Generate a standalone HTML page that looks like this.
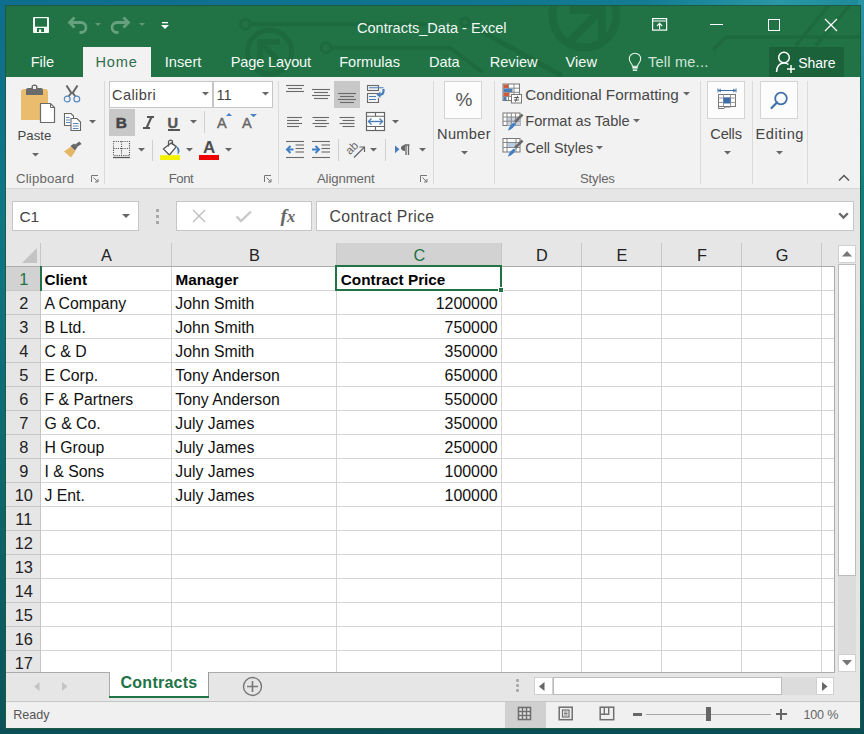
<!DOCTYPE html>
<html><head><meta charset="utf-8">
<style>
*{margin:0;padding:0;box-sizing:border-box}
html,body{width:864px;height:734px;overflow:hidden}
body{position:relative;font-family:"Liberation Sans",sans-serif;background:linear-gradient(180deg,#0e6d8a 0%,#0d6a7e 30%,#0c5a66 70%,#0a4d55 100%)}
.a{position:absolute;display:block}
.t{position:absolute;white-space:nowrap;line-height:1}
</style></head><body>

<div class="a" style="left:0px;top:0px;width:864px;height:6px;background:linear-gradient(90deg,#0e6e8e 0%,#0f7490 50%,#137c93 75%,#2a97a6 90%,#1c8a9a 100%)"></div>
<div class="a" style="left:0px;top:0px;width:6px;height:734px;background:linear-gradient(180deg,#0e6e8e 0%,#0f7686 30%,#0d6a70 60%,#0a5358 100%)"></div>
<div class="a" style="left:858px;top:0px;width:6px;height:734px;background:linear-gradient(180deg,#2a95a5 0%,#14807e 25%,#0e7372 50%,#0b5d60 80%,#0a4f55 100%)"></div>
<div class="a" style="left:0px;top:727px;width:864px;height:7px;background:linear-gradient(90deg,#0a5056,#0a4d55)"></div>
<div class="a" style="left:5px;top:5px;width:856px;height:724px;background:#1d5a40"></div>
<div class="a" style="left:6px;top:6px;width:854px;height:71px;background:#217346"></div>
<svg class="a" style="left:6px;top:6px;" width="854" height="71" viewBox="0 0 854 71">
<g stroke="#1d6a3e" fill="none">
<line x1="239.4" y1="18.2" x2="420" y2="18.2" stroke-width="4"/>
<circle cx="239.4" cy="18.2" r="4.8" stroke-width="3" fill="#217346"/>
<polyline points="320,41.7 444,41.7 476,66" stroke-width="4"/>
<circle cx="320" cy="41.7" r="4.8" stroke-width="3" fill="#217346"/>
<circle cx="263.6" cy="46" r="22" stroke-width="5"/>
<circle cx="578.4" cy="9.5" r="32" stroke-width="8"/>
<line x1="564" y1="35" x2="593" y2="6" stroke-width="8"/>
<polyline points="564,4 596,4 596,34" stroke-width="8"/>
<line x1="459" y1="16" x2="556" y2="70" stroke-width="5"/><circle cx="459" cy="16" r="4" stroke-width="3" fill="#217346"/>
<line x1="707" y1="43.7" x2="719.8" y2="31" stroke-width="3.5"/>
<line x1="719.8" y1="31" x2="854" y2="31" stroke-width="3.5"/>
<line x1="790" y1="39.5" x2="823" y2="-1" stroke-width="3.5"/>
<line x1="810" y1="39.5" x2="844" y2="-1" stroke-width="3.5"/>
<polyline points="254,54 254,36 274,36" stroke-width="5.5"/>
<line x1="256" y1="38" x2="272" y2="54" stroke-width="5.5"/>
</g>
</svg>
<div class="t" style="left:357.00px;top:21px;font-size:14.55px;color:#f0f7f2;">Contracts_Data - Excel</div>
<svg class="a" style="left:33px;top:17px;" width="16" height="16" viewBox="0 0 16 16">
<rect x="0" y="0" width="16" height="16" rx="0.8" fill="#f4fbf6"/>
<rect x="2" y="1.2" width="12" height="8.5" fill="#217346"/>
<rect x="4" y="11" width="7" height="4" fill="#217346"/>
<rect x="6" y="12.4" width="2.2" height="2.6" fill="#f4fbf6"/>
</svg>
<svg class="a" style="left:66px;top:14px;" width="24" height="22" viewBox="0 0 24 22">
<path d="M3.5,8.5 H15 A5,5 0 0 1 15,18.5 H13.5" fill="none" stroke="#67a07f" stroke-width="2.8"/>
<polyline points="8.5,3.5 3.5,8.5 8.5,13.5" fill="none" stroke="#67a07f" stroke-width="2.8"/>
</svg>
<svg class="a" style="left:95px;top:23px;" width="6" height="3" viewBox="0 0 6 3"><polygon points="0,0 6,0 3,3" fill="#5e9a77"/></svg>
<svg class="a" style="left:108px;top:14px;" width="24" height="22" viewBox="0 0 24 22">
<path d="M20.5,8.5 H9 A5,5 0 0 0 9,18.5 H10.5" fill="none" stroke="#67a07f" stroke-width="2.8"/>
<polyline points="15.5,3.5 20.5,8.5 15.5,13.5" fill="none" stroke="#67a07f" stroke-width="2.8"/>
</svg>
<svg class="a" style="left:139px;top:23px;" width="6" height="3" viewBox="0 0 6 3"><polygon points="0,0 6,0 3,3" fill="#5e9a77"/></svg>
<svg class="a" style="left:161px;top:22px;" width="8" height="8" viewBox="0 0 8 8"><rect x="1" y="0" width="6" height="1.3" fill="#fff"/><polygon points="0,3 8,3 4,7" fill="#fff"/></svg>
<svg class="a" style="left:652px;top:18px;" width="16" height="14" viewBox="0 0 16 14">
<rect x="0.6" y="0.6" width="14" height="11.5" fill="none" stroke="#fff" stroke-width="1.2"/>
<line x1="1" y1="3" x2="14.5" y2="3" stroke="#fff" stroke-width="1"/>
<path d="M7.6,11.5 V5.5 M5,8 L7.6,5.4 L10.2,8" fill="none" stroke="#fff" stroke-width="1.1"/>
</svg>
<div class="a" style="left:710px;top:24px;width:13px;height:1.2px;background:#fff"></div>
<div class="a" style="left:768px;top:19px;width:12px;height:12px;border:1.2px solid #fff"></div>
<svg class="a" style="left:824px;top:18px;" width="14" height="14" viewBox="0 0 14 14"><path d="M1,1 L13,13 M13,1 L1,13" stroke="#fff" stroke-width="1.3"/></svg>
<div class="a" style="left:83px;top:47px;width:68px;height:30px;background:#f2f2f2"></div>
<div class="t" style="left:30.70px;top:55px;font-size:14.6px;color:#f3faf5;">File</div>
<div class="t" style="left:95.50px;top:55px;font-size:14.6px;color:#2f6e4c;letter-spacing:0.8px;">Home</div>
<div class="t" style="left:164.80px;top:55px;font-size:14.6px;color:#f3faf5;">Insert</div>
<div class="t" style="left:230.70px;top:55px;font-size:14.6px;color:#f3faf5;letter-spacing:-0.15px;">Page Layout</div>
<div class="t" style="left:339.20px;top:55px;font-size:14.6px;color:#f3faf5;">Formulas</div>
<div class="t" style="left:428.90px;top:55px;font-size:14.6px;color:#f3faf5;">Data</div>
<div class="t" style="left:489.70px;top:55px;font-size:14.6px;color:#f3faf5;">Review</div>
<div class="t" style="left:565.60px;top:55px;font-size:14.6px;color:#f3faf5;">View</div>
<svg class="a" style="left:628px;top:52px;" width="15" height="20" viewBox="0 0 15 20">
<path d="M7,1.2 C3.6,1.2 1.3,3.8 1.3,6.8 C1.3,9.2 2.6,10.6 3.6,12 C4.2,12.9 4.4,13.6 4.4,14.3 H9.6 C9.6,13.6 9.8,12.9 10.4,12 C11.4,10.6 12.7,9.2 12.7,6.8 C12.7,3.8 10.4,1.2 7,1.2 Z" fill="none" stroke="#eaf5ee" stroke-width="1.1"/>
<rect x="4.3" y="14.6" width="5.4" height="2" fill="#eaf5ee"/><rect x="4.8" y="17.4" width="4.4" height="1.5" fill="#eaf5ee"/>
</svg>
<div class="t" style="left:648.00px;top:55px;font-size:14.6px;color:#cfe6d7;letter-spacing:0.2px;">Tell me...</div>
<div class="a" style="left:769px;top:47px;width:75px;height:30px;background:#1b6139"></div>
<svg class="a" style="left:775px;top:50px;" width="22" height="25" viewBox="0 0 22 25">
<circle cx="9" cy="7.5" r="5.3" fill="none" stroke="#fff" stroke-width="1.5"/>
<path d="M1.5,22 C1.5,16 5,13 9,13 C11,13 12.5,13.6 13.5,14.5" fill="none" stroke="#fff" stroke-width="1.5"/>
<path d="M16,15 V23 M12,19 H20" stroke="#fff" stroke-width="1.5"/>
</svg>
<div class="t" style="left:798.20px;top:56px;font-size:14.0px;color:#fff;">Share</div>
<div class="a" style="left:6px;top:77px;width:854px;height:111px;background:#f2f2f2"></div>
<div class="a" style="left:6px;top:188px;width:854px;height:1px;background:#d6d6d6"></div>
<div class="a" style="left:104px;top:81px;width:1px;height:103px;background:#dadada"></div>
<div class="a" style="left:278px;top:81px;width:1px;height:103px;background:#dadada"></div>
<div class="a" style="left:433px;top:81px;width:1px;height:103px;background:#dadada"></div>
<div class="a" style="left:494px;top:81px;width:1px;height:103px;background:#dadada"></div>
<div class="a" style="left:700px;top:81px;width:1px;height:103px;background:#dadada"></div>
<div class="a" style="left:752px;top:81px;width:1px;height:103px;background:#dadada"></div>
<div class="a" style="left:807px;top:81px;width:1px;height:103px;background:#dadada"></div>
<div class="t" style="left:16.00px;top:172px;font-size:13.2px;color:#666;letter-spacing:0.2px;">Clipboard</div>
<div class="t" style="left:168.80px;top:172px;font-size:13.2px;color:#666;letter-spacing:-0.5px;">Font</div>
<div class="t" style="left:316.90px;top:172px;font-size:13.2px;color:#666;letter-spacing:-0.1px;">Alignment</div>
<div class="t" style="left:580.00px;top:172px;font-size:13.2px;color:#666;letter-spacing:-0.2px;">Styles</div>
<svg class="a" style="left:91px;top:175px;" width="8" height="8" viewBox="0 0 8 8"><path d="M0.5,7 V0.5 H7" fill="none" stroke="#777" stroke-width="1"/><path d="M2.5,2.5 L7,7 M4,7 H7 V4" fill="none" stroke="#777" stroke-width="1"/></svg>
<svg class="a" style="left:264px;top:175px;" width="8" height="8" viewBox="0 0 8 8"><path d="M0.5,7 V0.5 H7" fill="none" stroke="#777" stroke-width="1"/><path d="M2.5,2.5 L7,7 M4,7 H7 V4" fill="none" stroke="#777" stroke-width="1"/></svg>
<svg class="a" style="left:420px;top:175px;" width="8" height="8" viewBox="0 0 8 8"><path d="M0.5,7 V0.5 H7" fill="none" stroke="#777" stroke-width="1"/><path d="M2.5,2.5 L7,7 M4,7 H7 V4" fill="none" stroke="#777" stroke-width="1"/></svg>
<svg class="a" style="left:20px;top:84px;" width="37" height="40" viewBox="0 0 37 40">
<path d="M1,8 Q1,5 4,5 H25 Q28,5 28,8 V36 H1 Z" fill="#e9bd6d"/>
<path d="M6,11 V6 Q6,4 8,4 H11.5 V3 Q11.5,0.5 14.5,0.5 Q17.5,0.5 17.5,3 V4 H21 Q23,4 23,6 V11 Z" fill="#6b6b6b"/>
<rect x="13" y="2" width="3" height="3" fill="#f2f2f2"/>
<path d="M20.5,19.5 H30.5 L34.5,23.5 V38.5 H20.5 Z" fill="#fff" stroke="#6b6b6b" stroke-width="1.2"/>
<path d="M30.5,19.5 V23.5 H34.5" fill="none" stroke="#6b6b6b" stroke-width="1"/>
</svg>
<div class="t" style="left:17.50px;top:129px;font-size:13.2px;color:#444;">Paste</div>
<svg class="a" style="left:32px;top:152.5px;" width="7" height="4" viewBox="0 0 7 4"><polygon points="0,0 7,0 3.5,3.5" fill="#666"/></svg>
<svg class="a" style="left:63px;top:85px;" width="18" height="18" viewBox="0 0 18 18">
<path d="M3.5,0.5 L8.3,8 L5.5,11.5 M14.5,0.5 L9.7,8 L12.5,11.5" fill="none" stroke="#666" stroke-width="2"/>
<circle cx="4.2" cy="14" r="2.9" fill="none" stroke="#5a8ac4" stroke-width="1.2"/>
<circle cx="13.8" cy="14" r="2.9" fill="none" stroke="#5a8ac4" stroke-width="1.2"/>
</svg>
<svg class="a" style="left:63px;top:112px;" width="19" height="20" viewBox="0 0 19 20">
<path d="M1.5,1.5 H8 L10.5,4 V13.5 H1.5 Z" fill="#fff" stroke="#666" stroke-width="1.1"/>
<path d="M8,6.5 H14 L17.5,10 V18.5 H8 Z" fill="#fff" stroke="#666" stroke-width="1.1"/>
<path d="M3,5.5 H6.5 M3,8 H7 M3,10.5 H7" stroke="#4a7ab0" stroke-width="0.9"/>
<path d="M9.8,11.5 H15.5 M9.8,14 H15.5 M9.8,16.5 H15.5" stroke="#4a7ab0" stroke-width="0.9"/>
</svg>
<svg class="a" style="left:88.5px;top:120px;" width="7" height="4" viewBox="0 0 7 4"><polygon points="0,0 7,0 3.5,3.5" fill="#666"/></svg>
<svg class="a" style="left:63px;top:141px;" width="20" height="18" viewBox="0 0 20 18">
<polygon points="1,10.5 8,5.5 12.5,10 8,16.5" fill="#e6b667"/>
<polygon points="7.5,5 11,2.5 14.5,6 12,9.5" fill="#666"/>
<polygon points="12,3.5 16.5,0.5 18.5,3 14,6" fill="#666"/>
</svg>
<div class="a" style="left:109px;top:81px;width:104px;height:27px;background:#fff;border:1px solid #c6c6c6"></div>
<div class="a" style="left:213px;top:81px;width:60px;height:27px;background:#fff;border:1px solid #c6c6c6"></div>
<div class="t" style="left:112.00px;top:88px;font-size:14.6px;color:#444;letter-spacing:0.4px;">Calibri</div>
<div class="t" style="left:216.50px;top:88px;font-size:14.6px;color:#444;">11</div>
<svg class="a" style="left:202px;top:92px;" width="7" height="4" viewBox="0 0 7 4"><polygon points="0,0 7,0 3.5,3.5" fill="#666"/></svg>
<svg class="a" style="left:262px;top:92px;" width="7" height="4" viewBox="0 0 7 4"><polygon points="0,0 7,0 3.5,3.5" fill="#666"/></svg>
<div class="a" style="left:109px;top:109px;width:26px;height:27px;background:#c8c8c8"></div>
<div class="t" style="left:115.80px;top:115px;font-size:15.5px;color:#444;font-weight:bold;-webkit-text-stroke:0.5px #444;">B</div>
<svg class="a" style="left:142px;top:116px;" width="13" height="13" viewBox="0 0 13 13"><path d="M5,1 H12 M1,12 H8 M9.5,1 L4.5,12" stroke="#555" stroke-width="2.1"/></svg>
<div class="t" style="left:167.60px;top:116px;font-size:14.6px;color:#555;font-weight:bold;-webkit-text-stroke:0.4px #555;">U</div>
<div class="a" style="left:168px;top:129.3px;width:11.5px;height:1.8px;background:#555"></div>
<svg class="a" style="left:189.5px;top:120px;" width="7" height="4" viewBox="0 0 7 4"><polygon points="0,0 7,0 3.5,3.5" fill="#666"/></svg>
<div class="a" style="left:204px;top:111px;width:1px;height:22px;background:#d0d0d0"></div>
<div class="t" style="left:217.00px;top:116px;font-size:14.5px;color:#666;-webkit-text-stroke:0.4px #666;">A</div>
<svg class="a" style="left:225.5px;top:112.5px;" width="6" height="3.5" viewBox="0 0 6 3.5"><polygon points="0,3 6,3 3,0" fill="#4a82c3"/></svg>
<div class="t" style="left:242.00px;top:116px;font-size:14.5px;color:#666;-webkit-text-stroke:0.4px #666;">A</div>
<svg class="a" style="left:249.7px;top:113.5px;" width="7" height="3.5" viewBox="0 0 7 3.5"><polygon points="0,0 7,0 3.5,3.2" fill="#4a82c3"/></svg>
<svg class="a" style="left:112px;top:140px;" width="19" height="19" viewBox="0 0 19 19">
<g stroke="#555" stroke-width="1.1" stroke-dasharray="1.1,1.1" fill="none">
<rect x="1.5" y="1.5" width="16" height="14"/>
<line x1="9.5" y1="1.5" x2="9.5" y2="15.5"/><line x1="1.5" y1="8.5" x2="17.5" y2="8.5"/>
</g><line x1="1" y1="17.5" x2="18" y2="17.5" stroke="#555" stroke-width="1.3"/>
</svg>
<svg class="a" style="left:137.5px;top:148px;" width="7" height="4" viewBox="0 0 7 4"><polygon points="0,0 7,0 3.5,3.5" fill="#666"/></svg>
<div class="a" style="left:152px;top:140px;width:1px;height:21px;background:#d0d0d0"></div>
<svg class="a" style="left:159px;top:138px;" width="22" height="23" viewBox="0 0 22 23">
<polygon points="4.3,10.9 12.2,4.9 17.3,8.6 10.4,17" fill="#fff" stroke="#555" stroke-width="1.3" stroke-linejoin="round"/>
<path d="M9.5,8.5 V4 C9.5,1.5 13.5,1.5 13.5,4 V7" fill="none" stroke="#555" stroke-width="1.2"/>
<path d="M17.3,8.6 C19.5,9 20.8,11 20.5,13.5 C20.2,15 19.5,16 18.5,16.5 C19,14 18.5,11 17.3,8.6 Z" fill="#4a7ebb"/>
<rect x="1" y="17.2" width="20" height="4.8" fill="#f2f200"/>
</svg>
<svg class="a" style="left:185.5px;top:148px;" width="7" height="4" viewBox="0 0 7 4"><polygon points="0,0 7,0 3.5,3.5" fill="#666"/></svg>
<div class="t" style="left:203.00px;top:139px;font-size:17px;color:#4f4f4f;font-weight:bold;">A</div>
<div class="a" style="left:199px;top:155px;width:20px;height:5px;background:#ee0000"></div>
<svg class="a" style="left:224.5px;top:148px;" width="7" height="4" viewBox="0 0 7 4"><polygon points="0,0 7,0 3.5,3.5" fill="#666"/></svg>
<div class="a" style="left:334px;top:81px;width:26px;height:27px;background:#c8c8c8"></div>
<svg class="a" style="left:0;top:0" width="864" height="200" viewBox="0 0 864 200"><line x1="286" y1="85.5" x2="304" y2="85.5" stroke="#6a6a6a" stroke-width="1.1"/><line x1="288" y1="88.5" x2="302" y2="88.5" stroke="#6a6a6a" stroke-width="1.1"/><line x1="286" y1="91.5" x2="304" y2="91.5" stroke="#6a6a6a" stroke-width="1.1"/><line x1="312" y1="89.5" x2="330" y2="89.5" stroke="#6a6a6a" stroke-width="1.1"/><line x1="314" y1="92.5" x2="328" y2="92.5" stroke="#6a6a6a" stroke-width="1.1"/><line x1="312" y1="95.5" x2="330" y2="95.5" stroke="#6a6a6a" stroke-width="1.1"/><line x1="314" y1="98.5" x2="328" y2="98.5" stroke="#6a6a6a" stroke-width="1.1"/><line x1="338" y1="93.5" x2="356" y2="93.5" stroke="#6a6a6a" stroke-width="1.1"/><line x1="340" y1="96.5" x2="354" y2="96.5" stroke="#6a6a6a" stroke-width="1.1"/><line x1="338" y1="99.5" x2="356" y2="99.5" stroke="#6a6a6a" stroke-width="1.1"/><line x1="340" y1="102.5" x2="354" y2="102.5" stroke="#6a6a6a" stroke-width="1.1"/><line x1="287" y1="117.5" x2="302" y2="117.5" stroke="#6a6a6a" stroke-width="1.1"/><line x1="312.5" y1="117.5" x2="329" y2="117.5" stroke="#6a6a6a" stroke-width="1.1"/><line x1="339.5" y1="117.5" x2="354.5" y2="117.5" stroke="#6a6a6a" stroke-width="1.1"/><line x1="287" y1="120.5" x2="299" y2="120.5" stroke="#6a6a6a" stroke-width="1.1"/><line x1="315" y1="120.5" x2="326.5" y2="120.5" stroke="#6a6a6a" stroke-width="1.1"/><line x1="342.5" y1="120.5" x2="354.5" y2="120.5" stroke="#6a6a6a" stroke-width="1.1"/><line x1="287" y1="123.5" x2="302" y2="123.5" stroke="#6a6a6a" stroke-width="1.1"/><line x1="312.5" y1="123.5" x2="329" y2="123.5" stroke="#6a6a6a" stroke-width="1.1"/><line x1="339.5" y1="123.5" x2="354.5" y2="123.5" stroke="#6a6a6a" stroke-width="1.1"/><line x1="287" y1="126.5" x2="299" y2="126.5" stroke="#6a6a6a" stroke-width="1.1"/><line x1="315" y1="126.5" x2="326.5" y2="126.5" stroke="#6a6a6a" stroke-width="1.1"/><line x1="342.5" y1="126.5" x2="354.5" y2="126.5" stroke="#6a6a6a" stroke-width="1.1"/><line x1="286" y1="141.5" x2="304" y2="141.5" stroke="#6a6a6a" stroke-width="1.1"/><line x1="295.5" y1="145" x2="304" y2="145" stroke="#6a6a6a" stroke-width="1.1"/><line x1="295.5" y1="148.5" x2="304" y2="148.5" stroke="#6a6a6a" stroke-width="1.1"/><line x1="295.5" y1="152" x2="304" y2="152" stroke="#6a6a6a" stroke-width="1.1"/><line x1="286" y1="157.5" x2="304" y2="157.5" stroke="#6a6a6a" stroke-width="1.1"/><path d="M287.5,149.5 H293.5" stroke="#3f7fc4" stroke-width="2"/><polyline points="290.5,146 287,149.5 290.5,153" fill="none" stroke="#3f7fc4" stroke-width="2"/><line x1="312" y1="141.5" x2="330" y2="141.5" stroke="#6a6a6a" stroke-width="1.1"/><line x1="321.5" y1="145" x2="330" y2="145" stroke="#6a6a6a" stroke-width="1.1"/><line x1="321.5" y1="148.5" x2="330" y2="148.5" stroke="#6a6a6a" stroke-width="1.1"/><line x1="321.5" y1="152" x2="330" y2="152" stroke="#6a6a6a" stroke-width="1.1"/><line x1="312" y1="157.5" x2="330" y2="157.5" stroke="#6a6a6a" stroke-width="1.1"/><path d="M312,149.5 H318.5" stroke="#3f7fc4" stroke-width="2"/><polyline points="315.5,146 319,149.5 315.5,153" fill="none" stroke="#3f7fc4" stroke-width="2"/><rect x="367.5" y="85.5" width="11" height="5" fill="none" stroke="#6a6a6a" stroke-width="1.1"/><path d="M378.5,93.5 H367.5 V102.5 H378.5 V98" fill="none" stroke="#6a6a6a" stroke-width="1.1"/><path d="M369,87.8 H383.5 M369,96.5 H376 M369,99.5 H376" stroke="#4a7ebb" stroke-width="1.1"/><path d="M383.5,89 V91 C383.5,93.5 382,94.8 379.5,94.8" fill="none" stroke="#4a7ebb" stroke-width="2.2"/><polygon points="376.5,94.8 380.5,91.5 380.5,98" fill="#4a7ebb"/></svg>
<svg class="a" style="left:365px;top:111px;" width="21" height="21" viewBox="0 0 21 21">
<rect x="1.5" y="1.5" width="18" height="18" fill="#fff" stroke="#666" stroke-width="1.2"/>
<path d="M1.5,5.3 H19.5 M1.5,15.5 H19.5 M10.5,1.5 V5.3 M10.5,15.5 V19.5" stroke="#666" stroke-width="1.1"/>
<path d="M3.5,10.5 H17.5" stroke="#4a7ebb" stroke-width="1.4"/>
<polyline points="6.5,7.5 3.5,10.5 6.5,13.5" fill="none" stroke="#4a7ebb" stroke-width="1.4"/>
<polyline points="14.5,7.5 17.5,10.5 14.5,13.5" fill="none" stroke="#4a7ebb" stroke-width="1.4"/>
</svg>
<svg class="a" style="left:392px;top:120px;" width="7" height="4" viewBox="0 0 7 4"><polygon points="0,0 7,0 3.5,3.5" fill="#666"/></svg>
<div class="a" style="left:338px;top:139px;width:1px;height:22px;background:#d0d0d0"></div>
<svg class="a" style="left:344px;top:139px;" width="24" height="21" viewBox="0 0 24 21">
<text x="2" y="13" font-family="Liberation Sans" font-size="11.5" fill="#666" transform="rotate(-45 8 10)">ab</text>
<path d="M10,18.5 L20.5,8" stroke="#666" stroke-width="1.2"/><polyline points="15.5,8 20.5,8 20.5,13" fill="none" stroke="#666" stroke-width="1.2"/>
</svg>
<svg class="a" style="left:370px;top:148px;" width="7" height="4" viewBox="0 0 7 4"><polygon points="0,0 7,0 3.5,3.5" fill="#666"/></svg>
<div class="a" style="left:385px;top:139px;width:1px;height:22px;background:#d0d0d0"></div>
<svg class="a" style="left:394px;top:144px;" width="18" height="12" viewBox="0 0 18 12">
<polygon points="1,1.5 5.5,5.3 1,9.3" fill="#4a7ebb"/>
<path d="M10.5,1 H15.5 M12,1 V11 M14.5,1 V11" stroke="#666" stroke-width="1.3"/>
<path d="M11,1 C8,1 7,2.5 7,4 C7,5.5 8,7 11,7 Z" fill="#666"/>
</svg>
<svg class="a" style="left:419px;top:148px;" width="7" height="4" viewBox="0 0 7 4"><polygon points="0,0 7,0 3.5,3.5" fill="#666"/></svg>
<div class="a" style="left:444px;top:81px;width:38px;height:38px;background:#fcfcfc;border:1px solid #d4d4d4"></div>
<div class="t" style="left:455.50px;top:90px;font-size:19px;color:#555;">%</div>
<div class="t" style="left:437.00px;top:127px;font-size:14.6px;color:#444;letter-spacing:0.35px;">Number</div>
<svg class="a" style="left:461px;top:151px;" width="7" height="4" viewBox="0 0 7 4"><polygon points="0,0 7,0 3.5,3.5" fill="#666"/></svg>
<svg class="a" style="left:502px;top:83px;" width="21" height="21" viewBox="0 0 21 21">
<rect x="1" y="1" width="16.5" height="16.5" fill="#fff" stroke="#777" stroke-width="1"/>
<path d="M1,5.2 H17.5 M1,9.3 H17.5 M1,13.4 H17.5 M6.5,1 V17.5 M12,1 V17.5" stroke="#888" stroke-width="1"/>
<rect x="1.5" y="1.5" width="4.5" height="3.5" fill="#d05a3a"/><rect x="1.5" y="5.7" width="9" height="3.3" fill="#4a7ebb"/>
<rect x="1.5" y="9.8" width="6" height="3.3" fill="#d05a3a"/><rect x="1.5" y="13.9" width="3" height="3.3" fill="#4a7ebb"/>
<rect x="9.5" y="11.5" width="10" height="8.5" fill="#fff" stroke="#777" stroke-width="1"/>
<path d="M11.8,14.6 H17.2 M11.8,17 H17.2 M15.6,12.8 L13.4,18.8" stroke="#444" stroke-width="0.9"/>
</svg>
<div class="t" style="left:525.30px;top:87px;font-size:15.25px;color:#484848;">Conditional Formatting</div>
<svg class="a" style="left:682.5px;top:92px;" width="7" height="4" viewBox="0 0 7 4"><polygon points="0,0 7,0 3.5,3.5" fill="#666"/></svg>
<svg class="a" style="left:502px;top:112px;" width="22" height="19" viewBox="0 0 22 19">
<rect x="1" y="1" width="17" height="12.5" fill="#fff" stroke="#777" stroke-width="1"/>
<rect x="5" y="5" width="13" height="8.5" fill="#c9d3df"/>
<path d="M1,5 H18 M1,9.2 H18 M5,1 V13.5 M9.3,1 V13.5 M13.6,1 V13.5" stroke="#888" stroke-width="1"/>
<path d="M13,10 L20.5,2.5" stroke="#6a6a6a" stroke-width="2.6"/>
<path d="M6,18.5 C7,15 9,12 12,10.5 L13.5,12 C12,15 10,17.5 6,18.5 Z" fill="#3f7fc4"/>
</svg>
<div class="t" style="left:525.30px;top:114px;font-size:14.6px;color:#484848;">Format as Table</div>
<svg class="a" style="left:633px;top:119px;" width="7" height="4" viewBox="0 0 7 4"><polygon points="0,0 7,0 3.5,3.5" fill="#666"/></svg>
<svg class="a" style="left:502px;top:137px;" width="22" height="20" viewBox="0 0 22 20">
<rect x="1" y="1.5" width="17" height="13.5" fill="#fff" stroke="#777" stroke-width="1"/>
<rect x="5" y="5.5" width="9" height="5" fill="#b9cde5"/>
<path d="M1,5.5 H18 M1,10.5 H18 M5,1.5 V15 M14,1.5 V15" stroke="#888" stroke-width="1"/>
<path d="M13,11 L20.5,3.5" stroke="#6a6a6a" stroke-width="2.6"/>
<path d="M6,19.5 C7,16 9,13 12,11.5 L13.5,13 C12,16 10,18.5 6,19.5 Z" fill="#3f7fc4"/>
</svg>
<div class="t" style="left:525.30px;top:141px;font-size:14.35px;color:#484848;">Cell Styles</div>
<svg class="a" style="left:596px;top:146px;" width="7" height="4" viewBox="0 0 7 4"><polygon points="0,0 7,0 3.5,3.5" fill="#666"/></svg>
<div class="a" style="left:707px;top:81px;width:38px;height:38px;background:#fcfcfc;border:1px solid #d4d4d4"></div>
<svg class="a" style="left:716px;top:88px;" width="22" height="23" viewBox="0 0 22 23">
<path d="M2.5,2.5 H19.5" stroke="#3d6fa8" stroke-width="1"/><path d="M2,0.5 V4.5 M20,0.5 V4.5" stroke="#3d6fa8" stroke-width="1"/>
<polyline points="5,1 2.5,2.5 5,4" fill="none" stroke="#3d6fa8" stroke-width="0.9"/><polyline points="17,1 19.5,2.5 17,4" fill="none" stroke="#3d6fa8" stroke-width="0.9"/>
<rect x="2.5" y="6.5" width="17" height="12" fill="#fff" stroke="#777" stroke-width="1"/>
<path d="M2.5,10 H19.5 M2.5,14.5 H19.5 M7.5,6.5 V18.5 M14.5,6.5 V18.5" stroke="#999" stroke-width="1"/>
<rect x="7.5" y="9.5" width="7" height="6" fill="#3d6fa8"/>
<path d="M2.5,18.5 V20.5 H8 L9,19 H14.5 V18.5" fill="none" stroke="#777" stroke-width="1"/>
</svg>
<div class="t" style="left:710.30px;top:127px;font-size:14.6px;color:#444;letter-spacing:-0.2px;">Cells</div>
<svg class="a" style="left:724px;top:151px;" width="7" height="4" viewBox="0 0 7 4"><polygon points="0,0 7,0 3.5,3.5" fill="#666"/></svg>
<div class="a" style="left:760px;top:81px;width:38px;height:38px;background:#fcfcfc;border:1px solid #d4d4d4"></div>
<svg class="a" style="left:769px;top:90px;" width="20" height="20" viewBox="0 0 20 20">
<circle cx="12" cy="8.5" r="5.8" fill="none" stroke="#3d6fa8" stroke-width="1.8"/>
<path d="M8,12.5 L2.5,18" stroke="#3d6fa8" stroke-width="2.2" stroke-linecap="round"/>
</svg>
<div class="t" style="left:755.50px;top:127px;font-size:14.6px;color:#444;letter-spacing:0.55px;">Editing</div>
<svg class="a" style="left:776px;top:151px;" width="7" height="4" viewBox="0 0 7 4"><polygon points="0,0 7,0 3.5,3.5" fill="#666"/></svg>
<svg class="a" style="left:838px;top:174px;" width="12" height="8" viewBox="0 0 12 8"><polyline points="1,6.5 6,1.5 11,6.5" fill="none" stroke="#555" stroke-width="1.5"/></svg>
<div class="a" style="left:6px;top:189px;width:854px;height:54px;background:#e6e6e6"></div>
<div class="a" style="left:12px;top:201px;width:127px;height:30px;background:#fff;border:1px solid #c6c6c6"></div>
<div class="t" style="left:19.50px;top:209px;font-size:15.4px;color:#444;">C1</div>
<svg class="a" style="left:122px;top:214px;" width="8" height="4" viewBox="0 0 8 4"><polygon points="0,0 8,0 4,4" fill="#666"/></svg>
<div class="a" style="left:156px;top:209px;width:3px;height:3px;background:#a8a8a8"></div>
<div class="a" style="left:156px;top:215px;width:3px;height:3px;background:#a8a8a8"></div>
<div class="a" style="left:156px;top:221px;width:3px;height:3px;background:#a8a8a8"></div>
<div class="a" style="left:176px;top:201px;width:136px;height:30px;background:#fff;border:1px solid #c6c6c6"></div>
<svg class="a" style="left:191px;top:208px;" width="16" height="16" viewBox="0 0 16 16"><path d="M2,2 L14,14 M14,2 L2,14" stroke="#bdbdbd" stroke-width="1.4"/></svg>
<svg class="a" style="left:234px;top:208px;" width="20" height="16" viewBox="0 0 20 16"><polyline points="2.5,8.5 7,13 17,3.5" fill="none" stroke="#c8c8c8" stroke-width="2.4"/></svg>
<div class="t" style="left:280.50px;top:206px;font-size:19.5px;color:#666;font-weight:bold;font-family:'Liberation Serif',serif;"><i>f</i><span style="font-size:16.5px"><i>x</i></span></div>
<div class="a" style="left:316px;top:201px;width:538px;height:30px;background:#fff;border:1px solid #c6c6c6"></div>
<div class="t" style="left:329.50px;top:209px;font-size:15.8px;color:#444;letter-spacing:0.35px;">Contract Price</div>
<svg class="a" style="left:838px;top:212px;" width="11" height="8" viewBox="0 0 11 8"><polyline points="1.2,1.2 5.5,5.5 9.8,1.2" fill="none" stroke="#686868" stroke-width="2.3"/></svg>
<div class="a" style="left:6px;top:243px;width:854px;height:430px;background:#fff"></div>
<div class="a" style="left:6px;top:243px;width:830px;height:23px;background:#e6e6e6"></div>
<div class="a" style="left:6px;top:266px;width:34px;height:406px;background:#e6e6e6"></div>
<div class="a" style="left:835px;top:243px;width:25px;height:430px;background:#e6e6e6"></div>
<div class="a" style="left:336px;top:243px;width:165px;height:23px;background:#d2d2d2"></div>
<div class="a" style="left:6px;top:266px;width:34px;height:24px;background:#d2d2d2"></div>
<svg class="a" style="left:21px;top:248px;" width="16" height="15" viewBox="0 0 16 15"><polygon points="16,0 16,15 1,15" fill="#c4c4c4"/></svg>
<div class="a" style="left:40px;top:243px;width:1px;height:23px;background:#c6c6c6"></div>
<div class="a" style="left:171px;top:243px;width:1px;height:23px;background:#c6c6c6"></div>
<div class="a" style="left:336px;top:243px;width:1px;height:23px;background:#c6c6c6"></div>
<div class="a" style="left:501px;top:243px;width:1px;height:23px;background:#c6c6c6"></div>
<div class="a" style="left:581px;top:243px;width:1px;height:23px;background:#c6c6c6"></div>
<div class="a" style="left:661px;top:243px;width:1px;height:23px;background:#c6c6c6"></div>
<div class="a" style="left:741px;top:243px;width:1px;height:23px;background:#c6c6c6"></div>
<div class="a" style="left:821px;top:243px;width:1px;height:23px;background:#c6c6c6"></div>
<div class="a" style="left:40px;top:243px;width:1px;height:430px;background:#c6c6c6"></div>
<div class="a" style="left:6px;top:266px;width:829px;height:1px;background:#ababab"></div>
<div class="a" style="left:6px;top:290px;width:34px;height:1px;background:#c6c6c6"></div>
<div class="a" style="left:41px;top:290px;width:794px;height:1px;background:#d4d4d4"></div>
<div class="a" style="left:6px;top:314px;width:34px;height:1px;background:#c6c6c6"></div>
<div class="a" style="left:41px;top:314px;width:794px;height:1px;background:#d4d4d4"></div>
<div class="a" style="left:6px;top:338px;width:34px;height:1px;background:#c6c6c6"></div>
<div class="a" style="left:41px;top:338px;width:794px;height:1px;background:#d4d4d4"></div>
<div class="a" style="left:6px;top:362px;width:34px;height:1px;background:#c6c6c6"></div>
<div class="a" style="left:41px;top:362px;width:794px;height:1px;background:#d4d4d4"></div>
<div class="a" style="left:6px;top:386px;width:34px;height:1px;background:#c6c6c6"></div>
<div class="a" style="left:41px;top:386px;width:794px;height:1px;background:#d4d4d4"></div>
<div class="a" style="left:6px;top:410px;width:34px;height:1px;background:#c6c6c6"></div>
<div class="a" style="left:41px;top:410px;width:794px;height:1px;background:#d4d4d4"></div>
<div class="a" style="left:6px;top:434px;width:34px;height:1px;background:#c6c6c6"></div>
<div class="a" style="left:41px;top:434px;width:794px;height:1px;background:#d4d4d4"></div>
<div class="a" style="left:6px;top:458px;width:34px;height:1px;background:#c6c6c6"></div>
<div class="a" style="left:41px;top:458px;width:794px;height:1px;background:#d4d4d4"></div>
<div class="a" style="left:6px;top:482px;width:34px;height:1px;background:#c6c6c6"></div>
<div class="a" style="left:41px;top:482px;width:794px;height:1px;background:#d4d4d4"></div>
<div class="a" style="left:6px;top:506px;width:34px;height:1px;background:#c6c6c6"></div>
<div class="a" style="left:41px;top:506px;width:794px;height:1px;background:#d4d4d4"></div>
<div class="a" style="left:6px;top:530px;width:34px;height:1px;background:#c6c6c6"></div>
<div class="a" style="left:41px;top:530px;width:794px;height:1px;background:#d4d4d4"></div>
<div class="a" style="left:6px;top:554px;width:34px;height:1px;background:#c6c6c6"></div>
<div class="a" style="left:41px;top:554px;width:794px;height:1px;background:#d4d4d4"></div>
<div class="a" style="left:6px;top:578px;width:34px;height:1px;background:#c6c6c6"></div>
<div class="a" style="left:41px;top:578px;width:794px;height:1px;background:#d4d4d4"></div>
<div class="a" style="left:6px;top:602px;width:34px;height:1px;background:#c6c6c6"></div>
<div class="a" style="left:41px;top:602px;width:794px;height:1px;background:#d4d4d4"></div>
<div class="a" style="left:6px;top:626px;width:34px;height:1px;background:#c6c6c6"></div>
<div class="a" style="left:41px;top:626px;width:794px;height:1px;background:#d4d4d4"></div>
<div class="a" style="left:6px;top:650px;width:34px;height:1px;background:#c6c6c6"></div>
<div class="a" style="left:41px;top:650px;width:794px;height:1px;background:#d4d4d4"></div>
<div class="a" style="left:6px;top:674px;width:34px;height:1px;background:#c6c6c6"></div>
<div class="a" style="left:41px;top:674px;width:794px;height:1px;background:#d4d4d4"></div>
<div class="a" style="left:171px;top:267px;width:1px;height:405px;background:#d4d4d4"></div>
<div class="a" style="left:336px;top:267px;width:1px;height:405px;background:#d4d4d4"></div>
<div class="a" style="left:501px;top:267px;width:1px;height:405px;background:#d4d4d4"></div>
<div class="a" style="left:581px;top:267px;width:1px;height:405px;background:#d4d4d4"></div>
<div class="a" style="left:661px;top:267px;width:1px;height:405px;background:#d4d4d4"></div>
<div class="a" style="left:741px;top:267px;width:1px;height:405px;background:#d4d4d4"></div>
<div class="a" style="left:821px;top:267px;width:1px;height:405px;background:#d4d4d4"></div>
<div class="a" style="left:834px;top:266px;width:1px;height:407px;background:#ababab"></div>
<div class="a" style="left:6px;top:672px;width:829px;height:1px;background:#ababab"></div>
<div class="t" style="left:-43.50px;width:300px;text-align:center;top:247px;font-size:16.3px;color:#222;">A</div>
<div class="t" style="left:104.50px;width:300px;text-align:center;top:247px;font-size:16.3px;color:#222;">B</div>
<div class="t" style="left:269.50px;width:300px;text-align:center;top:247px;font-size:16.3px;color:#217346;">C</div>
<div class="t" style="left:392.00px;width:300px;text-align:center;top:247px;font-size:16.3px;color:#222;">D</div>
<div class="t" style="left:472.00px;width:300px;text-align:center;top:247px;font-size:16.3px;color:#222;">E</div>
<div class="t" style="left:552.00px;width:300px;text-align:center;top:247px;font-size:16.3px;color:#222;">F</div>
<div class="t" style="left:632.00px;width:300px;text-align:center;top:247px;font-size:16.3px;color:#222;">G</div>
<div class="t" style="left:-126.20px;width:300px;text-align:center;top:271px;font-size:16.4px;color:#217346;">1</div>
<div class="t" style="left:-126.20px;width:300px;text-align:center;top:295px;font-size:16.4px;color:#222;">2</div>
<div class="t" style="left:-126.20px;width:300px;text-align:center;top:319px;font-size:16.4px;color:#222;">3</div>
<div class="t" style="left:-126.20px;width:300px;text-align:center;top:343px;font-size:16.4px;color:#222;">4</div>
<div class="t" style="left:-126.20px;width:300px;text-align:center;top:367px;font-size:16.4px;color:#222;">5</div>
<div class="t" style="left:-126.20px;width:300px;text-align:center;top:391px;font-size:16.4px;color:#222;">6</div>
<div class="t" style="left:-126.20px;width:300px;text-align:center;top:415px;font-size:16.4px;color:#222;">7</div>
<div class="t" style="left:-126.20px;width:300px;text-align:center;top:439px;font-size:16.4px;color:#222;">8</div>
<div class="t" style="left:-126.20px;width:300px;text-align:center;top:463px;font-size:16.4px;color:#222;">9</div>
<div class="t" style="left:-126.20px;width:300px;text-align:center;top:487px;font-size:16.4px;color:#222;">10</div>
<div class="t" style="left:-126.20px;width:300px;text-align:center;top:511px;font-size:16.4px;color:#222;">11</div>
<div class="t" style="left:-126.20px;width:300px;text-align:center;top:535px;font-size:16.4px;color:#222;">12</div>
<div class="t" style="left:-126.20px;width:300px;text-align:center;top:559px;font-size:16.4px;color:#222;">13</div>
<div class="t" style="left:-126.20px;width:300px;text-align:center;top:583px;font-size:16.4px;color:#222;">14</div>
<div class="t" style="left:-126.20px;width:300px;text-align:center;top:607px;font-size:16.4px;color:#222;">15</div>
<div class="t" style="left:-126.20px;width:300px;text-align:center;top:631px;font-size:16.4px;color:#222;">16</div>
<div class="t" style="left:-126.20px;width:300px;text-align:center;top:655px;font-size:16.4px;color:#222;">17</div>
<div class="t" style="left:44.50px;top:272px;font-size:15.3px;color:#000;font-weight:bold;">Client</div>
<div class="t" style="left:175.50px;top:272px;font-size:15.3px;color:#000;font-weight:bold;">Manager</div>
<div class="t" style="left:340.80px;top:272px;font-size:15.3px;color:#000;font-weight:bold;">Contract Price</div>
<div class="t" style="left:44.50px;top:296px;font-size:15.8px;color:#111;">A Company</div>
<div class="t" style="left:175.30px;top:296px;font-size:15.8px;color:#111;">John Smith</div>
<div class="t" style="left:197.60px;width:300px;text-align:right;top:296px;font-size:15.9px;color:#111;">1200000</div>
<div class="t" style="left:44.50px;top:320px;font-size:15.8px;color:#111;">B Ltd.</div>
<div class="t" style="left:175.30px;top:320px;font-size:15.8px;color:#111;">John Smith</div>
<div class="t" style="left:197.60px;width:300px;text-align:right;top:320px;font-size:15.9px;color:#111;">750000</div>
<div class="t" style="left:44.50px;top:344px;font-size:15.8px;color:#111;">C &amp; D</div>
<div class="t" style="left:175.30px;top:344px;font-size:15.8px;color:#111;">John Smith</div>
<div class="t" style="left:197.60px;width:300px;text-align:right;top:344px;font-size:15.9px;color:#111;">350000</div>
<div class="t" style="left:44.50px;top:368px;font-size:15.8px;color:#111;">E Corp.</div>
<div class="t" style="left:175.30px;top:368px;font-size:15.8px;color:#111;">Tony Anderson</div>
<div class="t" style="left:197.60px;width:300px;text-align:right;top:368px;font-size:15.9px;color:#111;">650000</div>
<div class="t" style="left:44.50px;top:392px;font-size:15.8px;color:#111;">F &amp; Partners</div>
<div class="t" style="left:175.30px;top:392px;font-size:15.8px;color:#111;">Tony Anderson</div>
<div class="t" style="left:197.60px;width:300px;text-align:right;top:392px;font-size:15.9px;color:#111;">550000</div>
<div class="t" style="left:44.50px;top:416px;font-size:15.8px;color:#111;">G &amp; Co.</div>
<div class="t" style="left:175.30px;top:416px;font-size:15.8px;color:#111;">July James</div>
<div class="t" style="left:197.60px;width:300px;text-align:right;top:416px;font-size:15.9px;color:#111;">350000</div>
<div class="t" style="left:44.50px;top:440px;font-size:15.8px;color:#111;">H Group</div>
<div class="t" style="left:175.30px;top:440px;font-size:15.8px;color:#111;">July James</div>
<div class="t" style="left:197.60px;width:300px;text-align:right;top:440px;font-size:15.9px;color:#111;">250000</div>
<div class="t" style="left:44.50px;top:464px;font-size:15.8px;color:#111;">I &amp; Sons</div>
<div class="t" style="left:175.30px;top:464px;font-size:15.8px;color:#111;">July James</div>
<div class="t" style="left:197.60px;width:300px;text-align:right;top:464px;font-size:15.9px;color:#111;">100000</div>
<div class="t" style="left:44.50px;top:488px;font-size:15.8px;color:#111;">J Ent.</div>
<div class="t" style="left:175.30px;top:488px;font-size:15.8px;color:#111;">July James</div>
<div class="t" style="left:197.60px;width:300px;text-align:right;top:488px;font-size:15.9px;color:#111;">100000</div>
<div class="a" style="left:335px;top:265px;width:167px;height:26px;border:2px solid #217346"></div>
<div class="a" style="left:40px;top:266px;width:2px;height:25px;background:#217346"></div>
<div class="a" style="left:498px;top:287px;width:6px;height:6px;background:#217346;border:1px solid #fff"></div>
<div class="a" style="left:838px;top:245px;width:18px;height:18px;background:#fff;border:1px solid #d0d0d0"></div>
<svg class="a" style="left:842px;top:251px;" width="10" height="6" viewBox="0 0 10 6"><polygon points="0,5.5 10,5.5 5,0" fill="#777"/></svg>
<div class="a" style="left:838px;top:264px;width:18px;height:312px;background:#fff;border:1px solid #bcbcbc"></div>
<div class="a" style="left:838px;top:576px;width:18px;height:78px;background:#dcdcdc"></div>
<div class="a" style="left:838px;top:654px;width:18px;height:18px;background:#fff;border:1px solid #d0d0d0"></div>
<svg class="a" style="left:842px;top:660px;" width="10" height="6" viewBox="0 0 10 6"><polygon points="0,0 10,0 5,5.5" fill="#777"/></svg>
<div class="a" style="left:6px;top:673px;width:854px;height:28px;background:#e6e6e6"></div>
<div class="a" style="left:6px;top:672px;width:104px;height:1px;background:#ababab"></div>
<div class="a" style="left:208px;top:672px;width:627px;height:1px;background:#ababab"></div>
<div class="a" style="left:6px;top:701px;width:854px;height:1px;background:#c6c6c6"></div>
<svg class="a" style="left:34px;top:682px;" width="6" height="9" viewBox="0 0 6 9"><polygon points="5.5,0 5.5,9 0,4.5" fill="#c4c4c4"/></svg>
<svg class="a" style="left:62px;top:682px;" width="6" height="9" viewBox="0 0 6 9"><polygon points="0,0 0,9 5.5,4.5" fill="#c4c4c4"/></svg>
<div class="a" style="left:109px;top:672px;width:100px;height:26px;background:#fff;border-left:1px solid #ababab;border-right:1px solid #9a9a9a"></div>
<div class="a" style="left:109px;top:696px;width:100px;height:2px;background:#217346"></div>
<div class="t" style="left:9.00px;width:300px;text-align:center;top:675px;font-size:16px;color:#217346;font-weight:bold;letter-spacing:0.25px;">Contracts</div>
<svg class="a" style="left:242px;top:676px;" width="21" height="21" viewBox="0 0 21 21"><circle cx="10.5" cy="10.5" r="9" fill="none" stroke="#777" stroke-width="1.4"/><path d="M10.5,5 V16 M5,10.5 H16" stroke="#777" stroke-width="1.6"/></svg>
<div class="a" style="left:516px;top:679px;width:3px;height:3px;background:#aaa;border-radius:1px"></div>
<div class="a" style="left:516px;top:684px;width:3px;height:3px;background:#aaa;border-radius:1px"></div>
<div class="a" style="left:516px;top:689px;width:3px;height:3px;background:#aaa;border-radius:1px"></div>
<div class="a" style="left:534px;top:677px;width:19px;height:18px;background:#fff;border:1px solid #d0d0d0"></div>
<svg class="a" style="left:539px;top:682px;" width="6" height="9" viewBox="0 0 6 9"><polygon points="5.5,0 5.5,9 0,4.5" fill="#666"/></svg>
<div class="a" style="left:553px;top:677px;width:229px;height:18px;background:#fff;border:1px solid #bcbcbc"></div>
<div class="a" style="left:782px;top:677px;width:34px;height:18px;background:#dcdcdc"></div>
<div class="a" style="left:816px;top:677px;width:18px;height:18px;background:#fff;border:1px solid #d0d0d0"></div>
<svg class="a" style="left:822px;top:682px;" width="6" height="9" viewBox="0 0 6 9"><polygon points="0,0 0,9 5.5,4.5" fill="#666"/></svg>
<div class="a" style="left:6px;top:702px;width:854px;height:26px;background:#f0f0f0"></div>
<div class="t" style="left:13.20px;top:709px;font-size:12.6px;color:#555;">Ready</div>
<div class="a" style="left:505px;top:702px;width:41px;height:26px;background:#d0d0d0"></div>
<svg class="a" style="left:517px;top:706px;" width="15" height="15" viewBox="0 0 15 15"><rect x="1.5" y="1.5" width="12" height="12" fill="#e4e4e4" stroke="#6f6f6f" stroke-width="1.6"/><path d="M5.5,1.5 V13.5 M9.5,1.5 V13.5 M1.5,5.5 H13.5 M1.5,9.5 H13.5" stroke="#6f6f6f" stroke-width="1.4"/></svg>
<svg class="a" style="left:558px;top:706px;" width="16" height="15" viewBox="0 0 16 15"><rect x="1.2" y="1.2" width="13" height="12.5" fill="none" stroke="#6f6f6f" stroke-width="1.5"/><rect x="4.5" y="4" width="6.5" height="7" fill="none" stroke="#6f6f6f" stroke-width="1.2"/><path d="M6,6 H9.5 M6,7.5 H9.5 M6,9 H9.5" stroke="#6f6f6f" stroke-width="0.9"/></svg>
<svg class="a" style="left:599px;top:706px;" width="16" height="15" viewBox="0 0 16 15"><rect x="1.2" y="1.2" width="13.5" height="12.5" fill="none" stroke="#6f6f6f" stroke-width="1.5"/><path d="M5.3,1.2 V8.2 M1.2,8.2 H9.7 V1.2" fill="none" stroke="#6f6f6f" stroke-width="1.4"/></svg>
<div class="a" style="left:633px;top:713px;width:9px;height:2.5px;background:#666"></div>
<div class="a" style="left:646px;top:714px;width:125px;height:1px;background:#a8a8a8"></div>
<div class="a" style="left:706px;top:707px;width:5px;height:13.5px;background:#666"></div>
<div class="a" style="left:775.5px;top:713px;width:11px;height:2.4px;background:#666"></div>
<div class="a" style="left:779.8px;top:708.8px;width:2.4px;height:11px;background:#666"></div>
<div class="t" style="left:803.50px;top:709px;font-size:12.6px;color:#666;letter-spacing:-0.2px;">100 %</div>
</body></html>
